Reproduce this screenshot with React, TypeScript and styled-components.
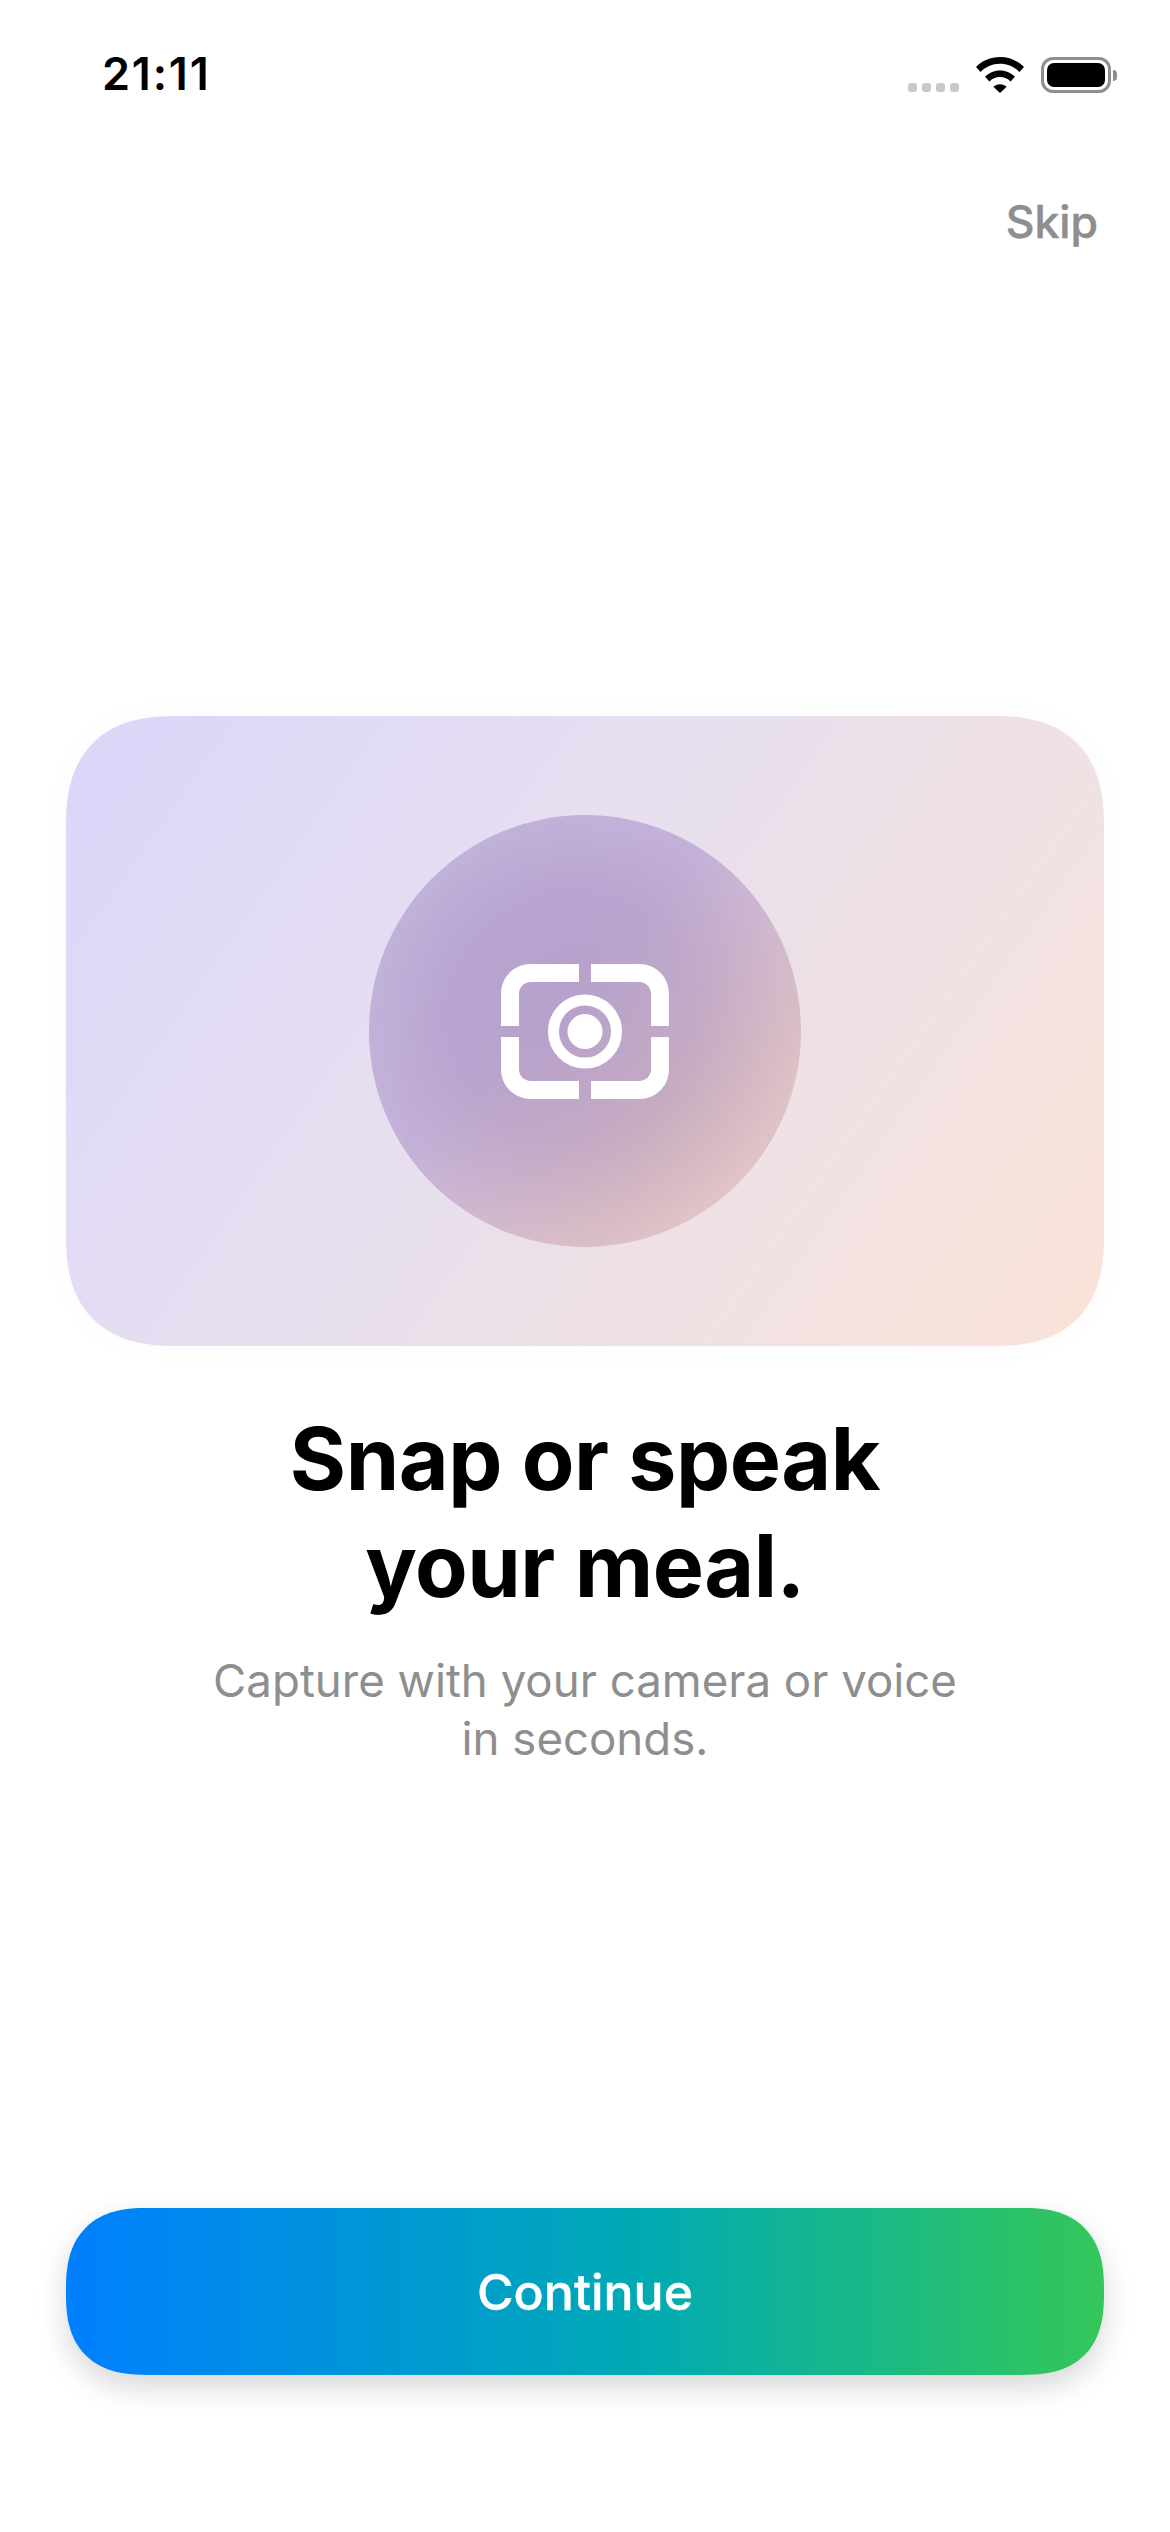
import React from "react";
import styled, { createGlobalStyle } from "styled-components";

const GlobalStyle = createGlobalStyle`
  html, body {
    margin: 0;
    padding: 0;
    background: #fff;
  }
  * {
    box-sizing: border-box;
  }
`;

const CameraIcon = () => (
  <svg width="168" height="135" viewBox="0 0 168 135" fill="#fff">
    <path d="M78 0H30C13 0 0 13 0 30V62H18V30C18 23 23 18 30 18H78Z" />
    <path d="M90 0H138C155 0 168 13 168 30V62H150V30C150 23 145 18 138 18H90Z" />
    <path d="M78 135H30C13 135 0 122 0 105V73H18V105C18 112 23 117 30 117H78Z" />
    <path d="M90 135H138C155 135 168 122 168 105V73H150V105C150 112 145 117 138 117H90Z" />
    <circle cx="84" cy="67.5" r="31.5" fill="none" stroke="#fff" strokeWidth="11" />
    <circle cx="84" cy="67.5" r="17.5" />
  </svg>
);

const WifiIcon = () => (
  <svg width="48" height="36" viewBox="0 0 48 36" fill="#000">
    <path d="M24 0C33.5 0 42 3.8 48 10L43.5 15C38.5 9.8 31.6 6.7 24 6.7S9.5 9.8 4.500 15L0 10C6 3.800 14.500 0 24 0Z" />
    <path d="M24 13.500C30 13.500 35.300 16 39 19.800L34.600 24.500C31.900 21.800 28.200 20.100 24 20.100S16.100 21.800 13.400 24.500L9 19.800C12.700 16 18 13.500 24 13.500Z" />
    <path d="M24 27.200C26.700 27.200 29 28.200 30.600 29.700L24 36L17.400 29.700C19 28.200 21.300 27.200 24 27.200Z" />
  </svg>
);

const App = () => {
  return (
    <Screen>
      <GlobalStyle />
      <StatusBar>
        <Time>21:11</Time>
        <StatusIcons>
          <Signal>
            {[0, 1, 2, 3].map((i) => (
              <SignalDot key={i} />
            ))}
          </Signal>
          <WifiIcon />
          <Battery>
            <BatteryBody>
              <BatteryFill />
            </BatteryBody>
            <BatteryCap />
          </Battery>
        </StatusIcons>
      </StatusBar>
      <TopRow>
        <Skip>Skip</Skip>
      </TopRow>
      <HeroCard>
        <HeroCircle>
          <CameraIcon />
        </HeroCircle>
      </HeroCard>
      <Title>
        Snap or speak
        <br />
        your meal.
      </Title>
      <Subtitle>
        Capture with your camera or voice
        <br />
        in seconds.
      </Subtitle>
      <ContinueButton>Continue</ContinueButton>
    </Screen>
  );
};

export default App;

const Screen = styled.div`
  width: 1170px;
  height: 2532px;
  display: flex;
  flex-direction: column;
  align-items: center;
  padding: 0 66px;
  background: #fff;
  font-family: Inter, "Liberation Sans", sans-serif;
  overflow: hidden;
`;

const StatusBar = styled.div`
  width: 100%;
  height: 54px;
  margin-top: 47px;
  display: flex;
  align-items: center;
  justify-content: space-between;
  padding-left: 36px;
`;

const Time = styled.div`
  font-size: 45px;
  font-weight: 600;
  line-height: 54px;
  color: #000;
  letter-spacing: 1.8px;
`;

const StatusIcons = styled.div`
  display: flex;
  align-items: flex-start;
  gap: 17px;
  margin-right: -13px;
  margin-top: 2px;
`;

const Signal = styled.div`
  display: flex;
  gap: 5px;
  margin-top: 26px;
`;

const SignalDot = styled.div`
  width: 9px;
  height: 9px;
  border-radius: 3px;
  background: #c7c7cc;
`;

const Battery = styled.div`
  display: flex;
  align-items: center;
  gap: 2px;
`;

const BatteryBody = styled.div`
  width: 70px;
  height: 36px;
  padding: 3px;
  border: 3px solid #8e8e8e;
  border-radius: 12px;
`;

const BatteryFill = styled.div`
  width: 100%;
  height: 100%;
  background: #000;
  border-radius: 7px;
`;

const BatteryCap = styled.div`
  width: 4px;
  height: 11px;
  background: #8e8e8e;
  border-radius: 0 4px 4px 0;
`;

const TopRow = styled.div`
  width: 100%;
  display: flex;
  justify-content: flex-end;
  margin-top: 94px;
`;

const Skip = styled.div`
  font-size: 44.5px;
  font-weight: 500;
  line-height: 54px;
  color: #8e8e8e;
  margin-right: 6px;
  -webkit-text-stroke: 0.5px #8e8e8e;
`;

const HeroCard = styled.div`
  width: 1038px;
  height: 630px;
  flex-shrink: 0;
  margin-top: 467px;
  display: flex;
  align-items: center;
  justify-content: center;
  border-radius: 110px;
  corner-shape: superellipse(1.3);
  background: linear-gradient(125deg, #dbd5fa 0%, #e6dff0 40%, #f9e3d7 100%);
  box-shadow: 0 0 40px rgba(0, 0, 0, 0.02);
`;

const HeroCircle = styled.div`
  width: 432px;
  height: 432px;
  border-radius: 50%;
  display: flex;
  align-items: center;
  justify-content: center;
  background: radial-gradient(circle at 46% 46%, rgba(140, 110, 165, 0.3) 0%, rgba(140, 110, 165, 0.24) 38%, rgba(140, 110, 165, 0) 74%),
    linear-gradient(135deg, #c6bae0 14%, #c8b6dc 42%, #dcc0c6 74%, #e4c8c6 92%);
`;

const Title = styled.h1`
  margin: 60px 0 0;
  text-align: center;
  font-size: 86px;
  font-weight: 700;
  line-height: 107px;
  letter-spacing: -0.5px;
  color: #000;
`;

const Subtitle = styled.p`
  margin: 32px 0 0;
  text-align: center;
  font-size: 45.6px;
  font-weight: 400;
  line-height: 58px;
  color: #8e8e8e;
`;

const ContinueButton = styled.div`
  width: 1038px;
  height: 167px;
  flex-shrink: 0;
  margin-top: auto;
  margin-bottom: 157px;
  display: flex;
  align-items: center;
  justify-content: center;
  border-radius: 80px;
  corner-shape: superellipse(1.3);
  background: linear-gradient(90deg, #007fff 0%, #00aab4 55%, #34c759 100%);
  box-shadow: 0 12px 30px rgba(0, 0, 0, 0.16);
  font-size: 50px;
  font-weight: 500;
  color: #fff;
  -webkit-text-stroke: 0.4px #fff;
`;
